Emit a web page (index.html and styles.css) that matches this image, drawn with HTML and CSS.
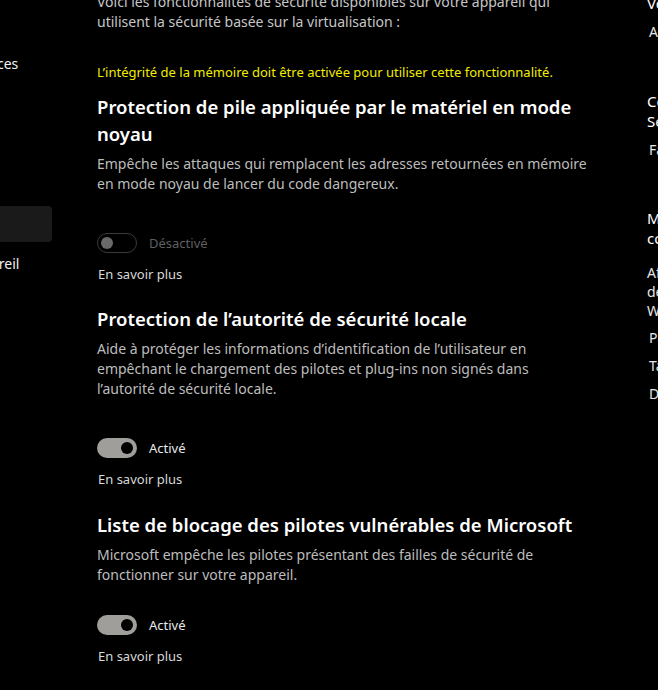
FILE: index.html
```html
<!DOCTYPE html>
<html lang="fr">
<head>
<meta charset="utf-8">
<title>Sécurité Windows — Isolation du noyau</title>
<link rel="stylesheet" href="styles.css">
</head>
<body>
<div class="app">
  <nav class="sidebar">
    <ul class="nav">
      <li class="nav-item">Protection contre les virus et menaces</li>
      <li class="nav-item">Protection du compte</li>
      <li class="nav-item">Pare-feu et protection</li>
      <li class="nav-item">Contrôle des applications</li>
      <li class="nav-item is-selected">Sécurité de l’appareil</li>
      <li class="nav-item">Performances et intégrité de l’appareil</li>
    </ul>
  </nav>

  <main class="main">
    <p class="intro">Voici les fonctionnalités de sécurité disponibles sur votre appareil qui utilisent la sécurité basée sur la virtualisation :</p>
    <p class="warning">L’intégrité de la mémoire doit être activée pour utiliser cette fonctionnalité.</p>

    <section class="feature feature-first">
      <h2 class="feature-title">Protection de pile appliquée par le matériel en mode noyau</h2>
      <p class="feature-desc">Empêche les attaques qui remplacent les adresses retournées en mémoire en mode noyau de lancer du code dangereux.</p>
      <div class="toggle-row">
        <span class="toggle toggle-off"><span class="knob"></span></span>
        <span class="toggle-label label-off">Désactivé</span>
      </div>
      <a class="link">En savoir plus</a>
    </section>

    <section class="feature">
      <h2 class="feature-title">Protection de l’autorité de sécurité locale</h2>
      <p class="feature-desc">Aide à protéger les informations d’identification de l’utilisateur en empêchant le chargement des pilotes et plug-ins non signés dans l’autorité de sécurité locale.</p>
      <div class="toggle-row">
        <span class="toggle toggle-on"><span class="knob"></span></span>
        <span class="toggle-label">Activé</span>
      </div>
      <a class="link">En savoir plus</a>
    </section>

    <section class="feature feature-compact">
      <h2 class="feature-title">Liste de blocage des pilotes vulnérables de Microsoft</h2>
      <p class="feature-desc">Microsoft empêche les pilotes présentant des failles de sécurité de fonctionner sur votre appareil.</p>
      <div class="toggle-row">
        <span class="toggle toggle-on"><span class="knob"></span></span>
        <span class="toggle-label">Activé</span>
      </div>
      <a class="link">En savoir plus</a>
    </section>
  </main>

  <aside class="aside">
    <h3 class="aside-title">Vous avez une question ?</h3>
    <a class="aside-link">Aide</a>

    <h3 class="aside-title aside-gap">Contribuer à améliorer la<br>Sécurité Windows</h3>
    <a class="aside-link">Faire des commentaires</a>

    <h3 class="aside-title aside-gap">Modifier vos paramètres de<br>confidentialité</h3>
    <p class="aside-text">Afficher et modifier les paramètres<br>de confidentialité de votre appareil<br>Windows 11.</p>
    <a class="aside-link aside-link-list">Paramètres de confidentialité</a>
    <a class="aside-link aside-link-list">Tableau de bord de confidentialité</a>
    <a class="aside-link aside-link-list">Déclaration de confidentialité</a>
  </aside>
</div>
</body>
</html>
```
FILE: styles.css
```css
html, body {
  margin: 0;
  padding: 0;
  background: #000;
}
body {
  width: 658px;
  height: 690px;
  overflow: hidden;
  font-family: "Noto Sans", "Open Sans", sans-serif;
  color: #fff;
}
.app {
  display: flex;
  align-items: flex-start;
  width: 658px;
  height: 690px;
  overflow: hidden;
}

/* sidebar */
.sidebar {
  flex: none;
  width: 52px;
  overflow: hidden;
}
.nav {
  list-style: none;
  margin: 46px 0 0 -232px;
  padding: 0;
  width: 284px;
  display: flex;
  flex-direction: column;
  gap: 4px;
}
.nav-item {
  height: 36px;
  line-height: 36px;
  font-size: 14px;
  white-space: nowrap;
  color: #f2f2f2;
  border-radius: 4px;
}
.nav-item.is-selected {
  background: #1a1a1a;
  color: transparent;
}

/* main column */
.main {
  flex: none;
  width: 491.5px;
  margin: -8px 0 0 45px;
}
.intro {
  margin: 0;
  font-size: 14px;
  line-height: 20px;
  color: #c6c6c6;
}
.warning {
  margin: 31px 0 0;
  font-size: 13px;
  line-height: 18px;
  color: #f2ec00;
}
.feature {
  margin-top: 22.5px;
}
.feature-first {
  margin-top: 11.5px;
}
.feature-title {
  margin: 0;
  font-size: 18.5px;
  font-weight: 600;
  line-height: 27px;
  color: #fff;
}
.feature-desc {
  margin: 7px 0 0;
  font-size: 14px;
  line-height: 20px;
  color: #bdbdbd;
}
.toggle-row {
  margin-top: 39px;
  height: 20px;
  display: flex;
  align-items: center;
  gap: 12px;
}
.feature-compact .toggle-row {
  margin-top: 30px;
}
.toggle {
  box-sizing: border-box;
  width: 40px;
  height: 20px;
  border-radius: 10px;
  display: flex;
  align-items: center;
  flex: none;
}
.toggle-off {
  border: 1px solid #3b3b3b;
  padding-left: 3px;
}
.toggle-off .knob {
  width: 12px;
  height: 12px;
  border-radius: 50%;
  background: #6a6a6a;
}
.toggle-on {
  background: #a09e9a;
  justify-content: flex-end;
  padding-right: 4px;
}
.toggle-on .knob {
  width: 12px;
  height: 12px;
  border-radius: 50%;
  background: #000;
}
.toggle-label {
  font-size: 13px;
  line-height: 18px;
  color: #e8e8e8;
}
.label-off {
  color: #5f5f5f;
}
.link {
  display: block;
  margin-top: 12px;
  padding-left: 1px;
  font-size: 13px;
  line-height: 18px;
  color: #d8d8d8;
}

/* right column */
.aside {
  flex: none;
  width: 260px;
  margin: -7px 0 0 58.5px;
}
.aside-title {
  margin: 0;
  font-size: 15px;
  font-weight: 400;
  line-height: 20px;
  color: #fff;
  white-space: nowrap;
}
.aside-gap {
  margin-top: 49px;
}
.aside-gap + .aside-link {
  margin-top: 7px;
}
.aside-title + .aside-link {
  margin-top: 9px;
}
.aside-link {
  display: block;
  padding-left: 2px;
  font-size: 14px;
  line-height: 20px;
  color: #e6e6e6;
  white-space: nowrap;
}
.aside-gap ~ .aside-gap {
  margin-top: 48px;
}
.aside-text {
  margin: 14.5px 0 0;
  font-size: 14px;
  line-height: 19px;
  color: #e6e6e6;
  white-space: nowrap;
}
.aside-link-list {
  margin-top: 8px;
}
.aside-text + .aside-link-list {
  margin-top: 8.5px;
}
```
